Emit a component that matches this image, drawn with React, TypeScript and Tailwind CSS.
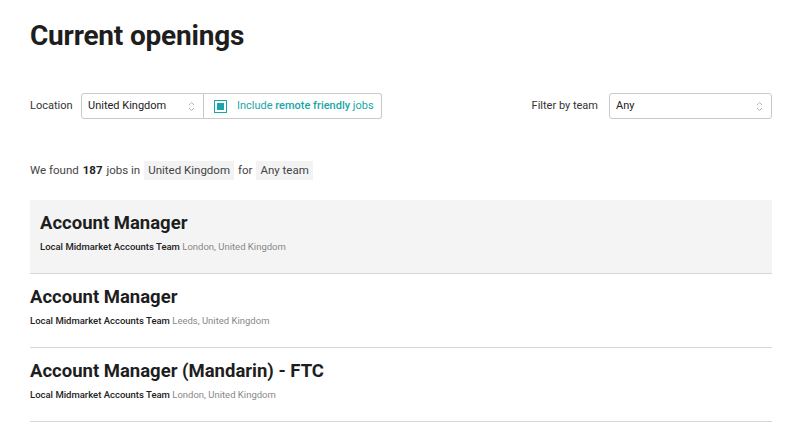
const jobs = [
  { title: "Account Manager", team: "Local Midmarket Accounts Team", location: "London, United Kingdom", active: true },
  { title: "Account Manager", team: "Local Midmarket Accounts Team", location: "Leeds, United Kingdom", active: false },
  { title: "Account Manager (Mandarin) - FTC", team: "Local Midmarket Accounts Team", location: "London, United Kingdom", active: false },
];

const heading = { fontFamily: 'Roboto, "Liberation Sans", sans-serif' };

function Chevrons() {
  return (
    <svg width="7" height="11" viewBox="0 0 7 11" fill="none" stroke="#b5b5b5" strokeWidth="1">
      <path d="M1 4 L3.5 1.5 L6 4" />
      <path d="M1 7 L3.5 9.5 L6 7" />
    </svg>
  );
}

export default function App() {
  return (
    <div className="w-[800px] h-[423px] overflow-hidden bg-white text-[#2a2a2a]" style={{ fontFamily: 'Roboto, "Noto Sans", sans-serif' }}>
      <div className="pl-[30px] pr-[28px] pt-[17px]">
        <h1 className="text-[28px] font-bold leading-[38px] tracking-[-0.2px] text-[#1e1e1e]" style={heading}>Current openings</h1>

        {/* filters */}
        <div className="flex items-center mt-[38px] h-[26px]">
          <span className="text-[11px] text-[#333] w-[51px]">Location</span>
          <div className="flex items-center justify-between w-[123px] h-[26px] border border-[#c9c9c9] rounded-l-[3px] pl-[6px] pr-[8px]">
            <span className="text-[11px] text-[#222]">United Kingdom</span>
            <Chevrons />
          </div>
          <div className="flex items-center h-[26px] w-[178px] border border-l-0 border-[#c9c9c9] rounded-r-[3px] pl-[10px] gap-[10px] whitespace-nowrap">
            <span className="w-[13px] h-[13px] border border-[#1aa6a6] flex items-center justify-center">
              <span className="w-[7px] h-[7px] bg-[#1aa6a6]" />
            </span>
            <span className="text-[11px] text-[#1aa6a6]">
              Include <span className="font-medium">remote friendly</span> jobs
            </span>
          </div>
          <div className="flex-1" />
          <span className="text-[11px] text-[#333] mr-[11px]">Filter by team</span>
          <div className="flex items-center justify-between w-[163px] h-[26px] border border-[#c9c9c9] rounded-[3px] pl-[6px] pr-[8px]">
            <span className="text-[11px] text-[#222]">Any</span>
            <Chevrons />
          </div>
        </div>

        {/* summary */}
        <p className="mt-[42px] text-[11.5px] text-[#444] flex items-center gap-[4px]">
          We found <span className="font-bold text-[#222]">187</span> jobs in
          <span className="bg-[#f3f3f3] px-[4px] py-[1px]">United Kingdom</span> for
          <span className="bg-[#f3f3f3] px-[4px] py-[1px]">Any team</span>
        </p>

        {/* job list */}
        <ul className="mt-[20px]">
          {jobs.map((job, index) => (
            <li
              key={index}
              className={`h-[74px] border-b border-[#d6d6d6] pt-[11px] ${job.active ? "bg-[#f4f4f4] px-[10px]" : ""}`}
            >
              <h2 className="text-[18.5px] font-bold leading-[24px] text-[#1e1e1e]" style={heading}>{job.title}</h2>
              <div className="mt-[6px] text-[9.5px] leading-[12px]">
                <span className="font-medium text-[#222]">{job.team}</span>{" "}
                <span className="text-[#888]">{job.location}</span>
              </div>
            </li>
          ))}
        </ul>
      </div>
    </div>
  );
}
